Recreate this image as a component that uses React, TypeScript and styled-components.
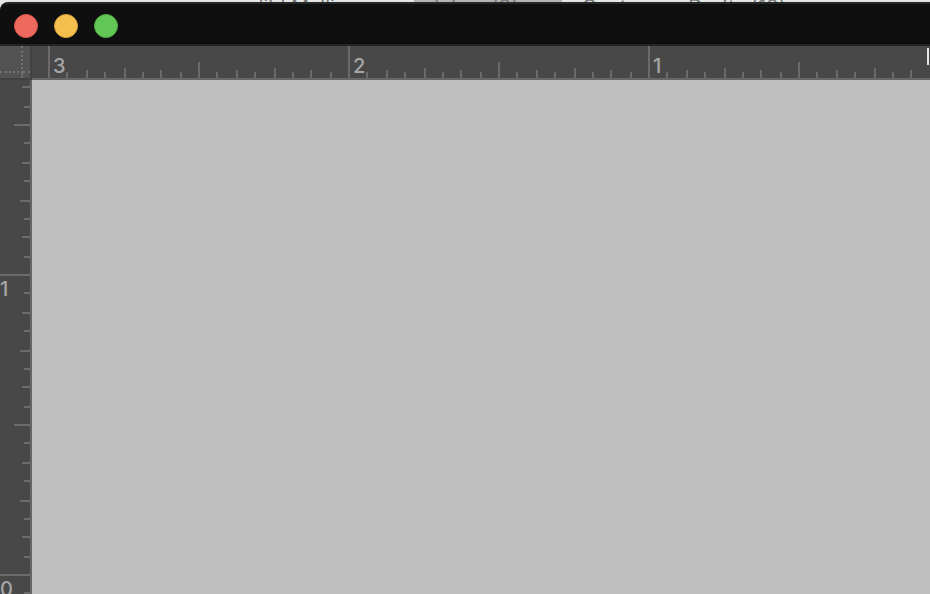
import React from 'react'
import styled, {createGlobalStyle} from 'styled-components'

const GlobalStyle = createGlobalStyle`
    body {
        margin: 0;
        background: #e3e6e5;
        font-family: Inter, 'Liberation Sans', sans-serif;
    }
`

const Screen = styled.div`
    display: flex;
    flex-direction: column;
    height: 100vh;
    overflow: hidden;
`

// the sliver of the browser tabs behind the window
const TabStrip = styled.div`
    display: flex;
    flex: none;
    height: 2px;
    overflow: hidden;
`

const Tab = styled.div<{$width?: number; $active?: boolean}>`
    box-sizing: border-box;
    display: flex;
    align-items: flex-start;
    flex: ${({$width}) => ($width ? `0 0 ${$width}px` : '1')};
    padding-left: 20px;
    background: ${({$active}) => ($active ? '#b2b4b4' : '#e3e6e5')};
    color: #777777;
    font-size: 20px;
    line-height: 14px;
    white-space: pre;
`

const Window = styled.main`
    display: flex;
    flex-direction: column;
    flex: 1;
    min-height: 0;
    border-top-left-radius: 8px;
    overflow: hidden;
    background: #484848;
`

const TitleBar = styled.header`
    box-sizing: border-box;
    display: flex;
    align-items: center;
    gap: 16px;
    flex: none;
    height: 44px;
    padding: 4px 14px 0;
    background: #0f0f0f;
    border-top: 2px solid #252828;
    border-bottom: 2px solid #242424;
    border-top-left-radius: 8px;
`

const WindowButton = styled.button<{$color: string; $edge: string}>`
    box-sizing: border-box;
    width: 24px;
    height: 24px;
    padding: 0;
    border: 1px solid ${({$edge}) => $edge};
    border-radius: 50%;
    background: ${({$color}) => $color};
`

const Workspace = styled.div`
    display: grid;
    grid-template-columns: 32px minmax(0, 1fr);
    grid-template-rows: 34px minmax(0, 1fr);
    flex: 1;
    min-height: 0;
`

const Corner = styled.div`
    display: grid;
    grid-template-columns: 23px 1fr;
    grid-template-rows: 27px 1fr;
    border-right: 2px solid #424242;
    border-bottom: 2px solid #424242;
    background: #535353;
`

const CornerCell = styled.div<{$right?: boolean; $bottom?: boolean}>`
    border-right: ${({$right}) => ($right ? '2px dotted #727272' : 'none')};
    border-bottom: ${({$bottom}) => ($bottom ? '2px dotted #727272' : 'none')};
`

const TopRuler = styled.div`
    position: relative;
    display: flex;
    padding-left: 16px;
    border-bottom: 2px solid #666666;
    overflow: hidden;
    background: #484848;
`

const SideRuler = styled.div`
    display: flex;
    flex-direction: column;
    padding-top: 6px;
    border-right: 2px solid #666666;
    overflow: hidden;
    background: #484848;
`

const TopStep = styled.div<{$size: number}>`
    display: flex;
    align-items: flex-end;
    flex: 0 0 ${({$size}) => $size}px;
    min-width: 0;
    height: 32px;
`

const SideStep = styled.div<{$size: number}>`
    display: flex;
    flex-direction: column;
    align-items: flex-end;
    flex: 0 0 ${({$size}) => $size}px;
    min-height: 0;
`

const TopTick = styled.i<{$length: number}>`
    flex: none;
    width: 2px;
    height: ${({$length}) => $length}px;
    background: #6a6a6a;
`

const SideTick = styled.i<{$length: number}>`
    flex: none;
    width: ${({$length}) => $length}px;
    height: 2px;
    background: #6a6a6a;
`

const TopLabel = styled.span`
    padding-left: 3px;
    color: #a6a6a6;
    font-size: 20px;
    font-weight: 500;
    line-height: 24px;
`

const SideLabel = styled.span`
    align-self: flex-start;
    color: #a6a6a6;
    font-size: 20px;
    font-weight: 500;
    line-height: 26px;
`

const Cursor = styled.div`
    position: absolute;
    top: 2px;
    right: 1px;
    width: 2px;
    height: 17px;
    background: #e6e6e6;
`

const Canvas = styled.section`
    background: #bfbfbf;
`

// gaps between the sixteenths, repeated every half inch
const STEPS = [18, 20, 18, 20, 18, 18, 20, 18]

const tickLength = (index: number, full: number) => {
    if (index % 16 === 0) return full
    if (index % 8 === 0) return 16
    if (index % 4 === 0) return 10
    return index % 2 === 0 ? 8 : 6
}

const range = (from: number, to: number) => Array.from({length: to - from}, (_, i) => from + i)

const App: React.FC = () => {
    return (
        <Screen>
            <GlobalStyle />
            <TabStrip aria-hidden="true">
                <Tab $width={220} />
                <Tab $width={194}>{'  dibl Malli'}</Tab>
                <Tab $width={148} $active>
                    Inbox (9)
                </Tab>
                <Tab>Captures - Drafts (12)</Tab>
            </TabStrip>
            <Window>
                <TitleBar>
                    <WindowButton $color="#ee6a5f" $edge="#d9564c" aria-label="Close" />
                    <WindowButton $color="#f5bf50" $edge="#dba23a" aria-label="Minimize" />
                    <WindowButton $color="#62c756" $edge="#50ad3f" aria-label="Zoom" />
                </TitleBar>
                <Workspace>
                    <Corner>
                        <CornerCell $right $bottom />
                        <CornerCell $bottom />
                        <CornerCell $right />
                    </Corner>
                    <TopRuler>
                        {range(0, 160).map(i => (
                            <TopStep key={i} $size={STEPS[i % 8]}>
                                <TopTick $length={tickLength(i, 32)} />
                                {i % 16 === 0 && <TopLabel>{Math.abs(3 - i / 16)}</TopLabel>}
                            </TopStep>
                        ))}
                        <Cursor />
                    </TopRuler>
                    <SideRuler>
                        {range(6, 160).map(i => (
                            <SideStep key={i} $size={STEPS[i % 8]}>
                                <SideTick $length={tickLength(i, 30)} />
                                {i % 16 === 0 && <SideLabel>{Math.abs(2 - i / 16)}</SideLabel>}
                            </SideStep>
                        ))}
                    </SideRuler>
                    <Canvas />
                </Workspace>
            </Window>
        </Screen>
    )
}

export default App
